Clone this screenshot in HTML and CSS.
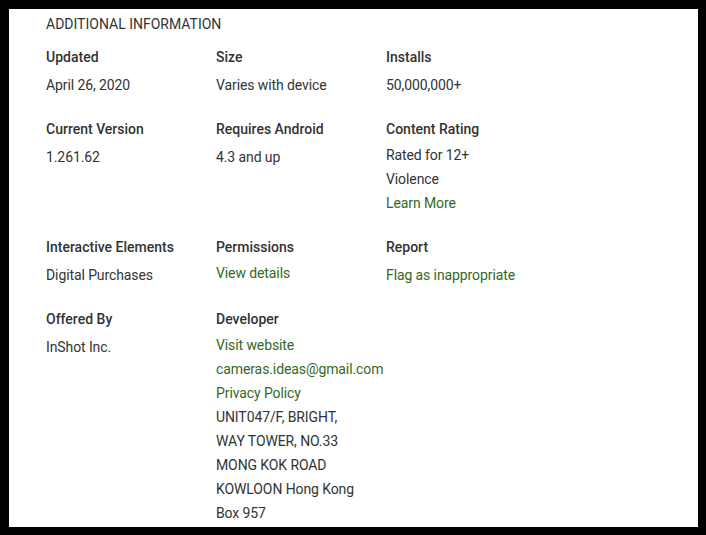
FILE: index.html
```html
<!DOCTYPE html>
<html lang="en">
<head>
  <meta charset="UTF-8">
  <title>Additional Information</title>
  <link rel="stylesheet" href="styles.css">
</head>
<body>
  <div class="info-panel">
    <h2 class="info-title">ADDITIONAL INFORMATION</h2>
    <div class="info-grid">
      <div class="info-item">
        <div class="info-label">Updated</div>
        <div class="info-value">April 26, 2020</div>
      </div>
      <div class="info-item">
        <div class="info-label">Size</div>
        <div class="info-value">Varies with device</div>
      </div>
      <div class="info-item">
        <div class="info-label">Installs</div>
        <div class="info-value">50,000,000+</div>
      </div>

      <div class="info-item">
        <div class="info-label">Current Version</div>
        <div class="info-value">1.261.62</div>
      </div>
      <div class="info-item">
        <div class="info-label">Requires Android</div>
        <div class="info-value">4.3 and up</div>
      </div>
      <div class="info-item">
        <div class="info-label">Content Rating</div>
        <div class="info-list">
          <div>Rated for 12+</div>
          <div>Violence</div>
          <div><a href="#">Learn More</a></div>
        </div>
      </div>

      <div class="info-item">
        <div class="info-label">Interactive Elements</div>
        <div class="info-value">Digital Purchases</div>
      </div>
      <div class="info-item">
        <div class="info-label">Permissions</div>
        <div class="info-list">
          <div><a href="#">View details</a></div>
        </div>
      </div>
      <div class="info-item">
        <div class="info-label">Report</div>
        <div class="info-value"><a href="#">Flag as inappropriate</a></div>
      </div>

      <div class="info-item">
        <div class="info-label">Offered By</div>
        <div class="info-value">InShot Inc.</div>
      </div>
      <div class="info-item">
        <div class="info-label">Developer</div>
        <div class="info-list">
          <div><a href="#">Visit website</a></div>
          <div><a href="#">cameras.ideas@gmail.com</a></div>
          <div><a href="#">Privacy Policy</a></div>
          <div>UNIT047/F, BRIGHT,</div>
          <div>WAY TOWER, NO.33</div>
          <div>MONG KOK ROAD</div>
          <div>KOWLOON Hong Kong</div>
          <div>Box 957</div>
        </div>
      </div>
    </div>
  </div>
</body>
</html>
```

FILE: styles.css
```css
html, body {
  height: 100%;
}

body {
  margin: 0;
  padding: 9px 8px 8px 9px;
  box-sizing: border-box;
  background-color: #000;
  font-family: Roboto, "Liberation Sans", Arial, sans-serif;
  font-size: 14px;
  color: #333;
}

.info-panel {
  background-color: #fff;
  height: 100%;
  padding: 5px 0 0 37px;
  box-sizing: border-box;
  overflow: hidden;
}

.info-title {
  margin: 0 0 13px;
  font-size: 14px;
  font-weight: 400;
  line-height: 20px;
  color: #333;
}

.info-grid {
  display: grid;
  grid-template-columns: 170px 170px 170px;
  row-gap: 22px;
}

.info-label {
  font-weight: 500;
  line-height: 20px;
  color: #333;
}

.info-value {
  margin-top: 6px;
  line-height: 24px;
  letter-spacing: -0.1px;
}

.info-list {
  margin-top: 4px;
  line-height: 24px;
  letter-spacing: -0.1px;
}

.info-item a {
  color: #33691e;
  text-decoration: none;
}
```
